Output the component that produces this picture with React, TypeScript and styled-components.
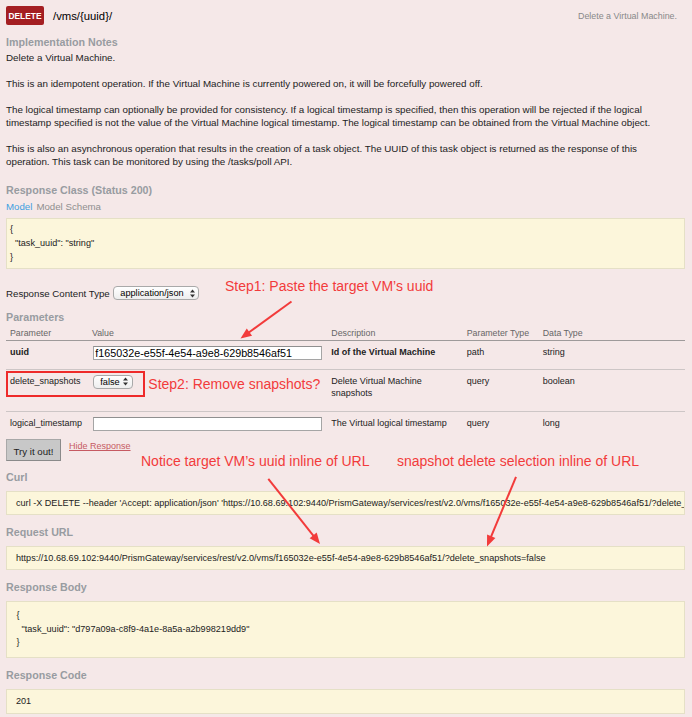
import React from "react";
import styled, { createGlobalStyle } from "styled-components";

const FONT = `"Liberation Sans", Arial, Helvetica, sans-serif`;

const Global = createGlobalStyle`
  html, body { margin: 0; padding: 0; background: #f5e8e8; }
  body { font-family: ${FONT}; color: #222; }
  #root { width: 692px; min-height: 717px; background: #f5e8e8; }
`;

const Page = styled.div`
  position: relative;
  width: 692px;
  height: 717px;
  box-sizing: border-box;
  padding: 6px 7.5px 0 6px;
  background: #f5e8e8;
  overflow: hidden;
  font-family: ${FONT};
`;

const Header = styled.div`
  display: flex;
  align-items: center;
  height: 19px;
`;

const Badge = styled.span`
  display: inline-flex;
  align-items: center;
  justify-content: center;
  width: 38px;
  height: 19px;
  background: #a41e22;
  color: #fff;
  font-weight: bold;
  font-size: 8.4px;
  border-radius: 2px;
`;

const PathText = styled.span`
  margin-left: 9px;
  font-size: 11.3px;
  color: #000;
`;

const Summary = styled.span`
  margin-left: auto;
  margin-right: 7.5px;
  font-size: 8.9px;
  color: #888;
`;

const Heading = styled.h4<{ $mt: number }>`
  margin: ${(p) => p.$mt}px 0 0;
  font-size: 10.7px;
  line-height: 14px;
  font-weight: bold;
  color: #989ca1;
`;

const Para = styled.p<{ $mt: number }>`
  margin: ${(p) => p.$mt}px 0 0;
  max-width: 668px;
  font-size: 9.8px;
  line-height: 13px;
  color: #222;
`;

const SigNav = styled.div`
  display: flex;
  gap: 4px;
  margin-top: 2.5px;
  font-size: 9.7px;
  line-height: 13px;
`;

const NavLink = styled.span<{ $active?: boolean }>`
  color: ${(p) => (p.$active ? "#3f9fe0" : "#8f8f8f")};
`;

const Snippet = styled.div<{ $mt: number; $pad: string; $lh: number }>`
  margin-top: ${(p) => p.$mt}px;
  box-sizing: border-box;
  width: 100%;
  background: #fcf6db;
  border: 1px solid #e5e0c6;
  padding: ${(p) => p.$pad};
  font-size: 9.1px;
  line-height: ${(p) => p.$lh}px;
  color: #222;
  white-space: pre;
  overflow: hidden;
`;

const ContentTypeRow = styled.div`
  display: flex;
  align-items: center;
  height: 15px;
  margin-top: 17px;
  font-size: 9.7px;
  color: #222;
`;

const Select = styled.span<{ $w: number; $ml: number }>`
  display: inline-flex;
  align-items: center;
  justify-content: space-between;
  box-sizing: border-box;
  width: ${(p) => p.$w}px;
  height: 14px;
  margin-left: ${(p) => p.$ml}px;
  padding: 0 3.5px 0 6px;
  border: 1px solid #a9a9a9;
  border-radius: 4px;
  background: linear-gradient(#ffffff, #eeeeee);
  font-size: 9.2px;
  color: #000;
`;

const Table = styled.div`
  width: 100%;
  font-size: 9px;
  line-height: 12px;
`;

const Row = styled.div<{ $pt: number; $pb: number; $border: string }>`
  display: grid;
  grid-template-columns: 82px 239.3px 135.4px 76px 1fr;
  padding: ${(p) => p.$pt}px 0 ${(p) => p.$pb}px;
  border-bottom: ${(p) => p.$border};
`;

const HeadCell = styled.div`
  padding: 0 4px;
  color: #666;
  font-size: 8.8px;
`;

const Cell = styled.div<{ $bold?: boolean }>`
  padding: 0 4px;
  color: #222;
  font-weight: ${(p) => (p.$bold ? "bold" : "normal")};
`;

const TextInput = styled.input`
  display: block;
  box-sizing: border-box;
  width: 228.4px;
  height: 14px;
  margin: 0 0 0 1.3px;
  padding: 0 1px;
  border: 1px solid #a5a5a5;
  border-top-color: #8f8f8f;
  background: #fff;
  font-family: ${FONT};
  font-size: 10.75px;
  color: #000;
  outline: none;
`;

const ActionRow = styled.div`
  display: flex;
  align-items: flex-start;
`;

const TryButton = styled.button`
  box-sizing: border-box;
  width: 55px;
  height: 21.7px;
  margin: 0;
  padding: 2px 0 0;
  background: #c8c8c8;
  border: 1px solid #a8a8a8;
  border-right-color: #8a8a8a;
  border-bottom-color: #8a8a8a;
  font-family: ${FONT};
  font-size: 9.7px;
  color: #222;
`;

const HideLink = styled.span`
  margin: 1px 0 0 8px;
  font-size: 9px;
  line-height: 13px;
  color: #c65a62;
  text-decoration: underline;
`;

const Annotation = styled.div<{ $x: number; $y: number }>`
  position: absolute;
  left: ${(p) => p.$x}px;
  top: ${(p) => p.$y}px;
  font-size: 14px;
  line-height: 16px;
  color: #f23b3b;
  white-space: nowrap;
`;

const Highlight = styled.div`
  position: absolute;
  left: 6.3px;
  top: 370.7px;
  width: 138.4px;
  height: 26px;
  box-sizing: border-box;
  border: 2px solid #ee2a2a;
`;

const ArrowLayer = styled.svg`
  position: absolute;
  left: 0;
  top: 0;
  pointer-events: none;
`;

const Updown = () => (
  <svg width="5" height="9" viewBox="0 0 5 9">
    <polygon points="0,3.6 2.5,0.4 5,3.6" fill="#333" />
    <polygon points="0,5.4 2.5,8.6 5,5.4" fill="#333" />
  </svg>
);

const arrows: [number, number, number, number][] = [
  [291.5, 301.5, 240.5, 338.5],
  [268.3, 478.8, 320, 544],
  [516, 476.8, 487, 546.5],
];

const Arrows = () => (
  <ArrowLayer width="692" height="717" viewBox="0 0 692 717">
    {arrows.map(([x1, y1, x2, y2], i) => {
      const dx = x2 - x1;
      const dy = y2 - y1;
      const len = Math.hypot(dx, dy);
      const ux = dx / len;
      const uy = dy / len;
      const ex = x2 - ux * 6;
      const ey = y2 - uy * 6;
      const bx = x2 - ux * 11;
      const by = y2 - uy * 11;
      return (
        <g key={i}>
          <line x1={x1} y1={y1} x2={ex} y2={ey} stroke="#f23b3b" strokeWidth="2" />
          <path
            d={`M${x2},${y2} L${bx - uy * 4.5},${by + ux * 4.5} L${bx + uy * 4.5},${by - ux * 4.5} z`}
            fill="#f23b3b"
          />
        </g>
      );
    })}
  </ArrowLayer>
);

const uuid = "f165032e-e55f-4e54-a9e8-629b8546af51";
const base = `https://10.68.69.102:9440/PrismGateway/services/rest/v2.0/vms/${uuid}/?delete_snapshots=false`;

export default function App() {
  return (
    <>
      <Global />
      <Page>
        <Header>
          <Badge>DELETE</Badge>
          <PathText>/vms/{"{uuid}"}/</PathText>
          <Summary>Delete a Virtual Machine.</Summary>
        </Header>

        <Heading $mt={10.3}>Implementation Notes</Heading>
        <Para $mt={1.7}>Delete a Virtual Machine.</Para>
        <Para $mt={13}>
          This is an idempotent operation. If the Virtual Machine is currently powered on, it will be
          forcefully powered off.
        </Para>
        <Para $mt={13}>
          The logical timestamp can optionally be provided for consistency. If a logical timestamp is
          specified, then this operation will be rejected if the logical timestamp specified is not the
          value of the Virtual Machine logical timestamp. The logical timestamp can be obtained from the
          Virtual Machine object.
        </Para>
        <Para $mt={13}>
          This is also an asynchronous operation that results in the creation of a task object. The
          UUID of this task object is returned as the response of this operation. This task can be
          monitored by using the /tasks/poll API.
        </Para>

        <Heading $mt={15.5}>Response Class (Status 200)</Heading>
        <SigNav>
          <NavLink $active>Model</NavLink>
          <NavLink>Model Schema</NavLink>
        </SigNav>
        <Snippet $mt={5} $pad="3.5px 3px" $lh={14}>
          {`{\n  "task_uuid": "string"\n}`}
        </Snippet>

        <ContentTypeRow>
          Response Content Type
          <Select $w={86} $ml={3.5}>
            application/json
            <Updown />
          </Select>
        </ContentTypeRow>

        <Heading $mt={9.3}>Parameters</Heading>
        <Table>
          <Row $pt={3} $pb={1.2} $border="1px solid #9e9a9a">
            <HeadCell>Parameter</HeadCell>
            <HeadCell>Value</HeadCell>
            <HeadCell>Description</HeadCell>
            <HeadCell>Parameter Type</HeadCell>
            <HeadCell>Data Type</HeadCell>
          </Row>
          <Row $pt={4.5} $pb={9.5} $border="1px solid #cdc6c6">
            <Cell $bold>uuid</Cell>
            <Cell>
              <TextInput readOnly defaultValue={uuid} />
            </Cell>
            <Cell $bold>Id of the Virtual Machine</Cell>
            <Cell>path</Cell>
            <Cell>string</Cell>
          </Row>
          <Row $pt={4.5} $pb={12.2} $border="1px solid #cdc6c6">
            <Cell>delete_snapshots</Cell>
            <Cell>
              <Select $w={39.4} $ml={1.3}>
                false
                <Updown />
              </Select>
            </Cell>
            <Cell>Delete Virtual Machine snapshots</Cell>
            <Cell>query</Cell>
            <Cell>boolean</Cell>
          </Row>
          <Row $pt={4.5} $pb={8.8} $border="none">
            <Cell>logical_timestamp</Cell>
            <Cell>
              <TextInput readOnly defaultValue="" />
            </Cell>
            <Cell>The Virtual logical timestamp</Cell>
            <Cell>query</Cell>
            <Cell>long</Cell>
          </Row>
        </Table>

        <ActionRow>
          <TryButton>Try it out!</TryButton>
          <HideLink>Hide Response</HideLink>
        </ActionRow>

        <Heading $mt={9}>Curl</Heading>
        <Snippet $mt={7} $pad="4.65px 9px" $lh={13}>
          {`curl -X DELETE --header 'Accept: application/json' '${base}'`}
        </Snippet>

        <Heading $mt={10}>Request URL</Heading>
        <Snippet $mt={6.5} $pad="4.65px 9px" $lh={13}>
          {base}
        </Snippet>

        <Heading $mt={10}>Response Body</Heading>
        <Snippet $mt={6.5} $pad="7px 9.5px" $lh={13.8}>
          {`{\n  "task_uuid": "d797a09a-c8f9-4a1e-8a5a-a2b998219dd9"\n}`}
        </Snippet>

        <Heading $mt={10}>Response Code</Heading>
        <Snippet $mt={6.5} $pad="5px 9px" $lh={13}>
          201
        </Snippet>

        <Highlight />
        <Annotation $x={225} $y={277.5}>Step1: Paste the target VM’s uuid</Annotation>
        <Annotation $x={148.3} $y={376.3}>Step2: Remove snapshots?</Annotation>
        <Annotation $x={141} $y={452.7}>Notice target VM’s uuid inline of URL</Annotation>
        <Annotation $x={397} $y={452.7}>snapshot delete selection inline of URL</Annotation>
        <Arrows />
      </Page>
    </>
  );
}
